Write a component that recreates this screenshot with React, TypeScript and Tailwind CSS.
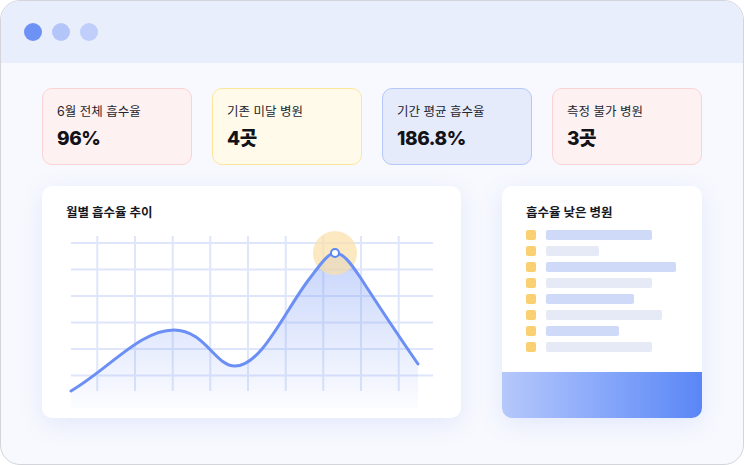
import React from 'react';

const font = { fontFamily: 'Inter, "Noto Sans CJK KR", "Noto Sans", sans-serif' };

const stats = [
  { label: '6월 전체 흡수율', value: '96%', box: 'bg-[#fef1f2] border-[#fbd3d4]' },
  { label: '기존 미달 병원', value: '4곳', box: 'bg-[#fffaea] border-[#fde59a]' },
  { label: '기간 평균 흡수율', value: '186.8%', box: 'bg-[#e5ebfb] border-[#b5c8f9]' },
  { label: '측정 불가 병원', value: '3곳', box: 'bg-[#fef1f2] border-[#fbd3d4]' },
];

const rows = [106, 53, 130, 106, 88, 116, 73, 106];

const hLines = [243, 269.5, 296, 322.5, 349, 375.5];
const vLines = [97.3, 135, 172.7, 210.3, 248, 285.7, 323.3, 361, 398.7];

const curve =
  'M71,391 C110,368 140,330 174,330 C205,330 215,366 235,366 C262,366 285,310 310,278 C320,265 328,253 335,253 C343,253 350,262 360,277 C380,308 400,338 418,364';

function StatCard({ label, value, box }: { label: string; value: string; box: string }) {
  return (
    <div className={`w-[150px] h-[77px] rounded-[10px] border px-[14px] pt-[14px] ${box}`}>
      <div className="text-[12.5px] leading-[18px] text-[#23262f]">{label}</div>
      <div className="mt-[6px] text-[19px] leading-[24px] font-extrabold text-[#111318] tracking-[-0.4px]">{value}</div>
    </div>
  );
}

function TrendChart() {
  return (
    <svg width={419} height={180} viewBox="42 230 419 180">
      <defs>
        <linearGradient id="area" x1="0" y1="253" x2="0" y2="408" gradientUnits="userSpaceOnUse">
          <stop offset="0" stopColor="#6b8ff5" stopOpacity="0.38" />
          <stop offset="1" stopColor="#6b8ff5" stopOpacity="0.02" />
        </linearGradient>
      </defs>
      {hLines.map((y) => (
        <line key={`h${y}`} x1={71} x2={433} y1={y} y2={y} stroke="#dfe6fb" strokeWidth={2} />
      ))}
      {vLines.map((x) => (
        <line key={`v${x}`} x1={x} x2={x} y1={236} y2={391} stroke="#dfe6fb" strokeWidth={2} />
      ))}
      <path d={`${curve} L418,408 L71,408 Z`} fill="url(#area)" />
      <circle cx={335} cy={253} r={22} fill="#fbdfa8" fillOpacity={0.7} />
      <path d={curve} fill="none" stroke="#6b8ff5" strokeWidth={3} strokeLinecap="round" />
      <circle cx={335} cy={253} r={4} fill="#fff" stroke="#5b86f5" strokeWidth={2} />
    </svg>
  );
}

export default function App() {
  return (
    <div className="w-[744px] h-[465px] bg-white" style={font}>
      <div className="w-full h-full rounded-[20px] border border-[#d4d5da] overflow-hidden flex flex-col bg-[#f7f9fe]">
        {/* window bar */}
        <div className="h-[62px] shrink-0 bg-[#e8eefc] flex items-center gap-[10px] pl-[23px]">
          <span className="w-[18px] h-[18px] rounded-full bg-[#6e91f5]" />
          <span className="w-[18px] h-[18px] rounded-full bg-[#b4c6f9]" />
          <span className="w-[18px] h-[18px] rounded-full bg-[#bfcefa]" />
        </div>

        <div className="px-[41px] pt-[25px]">
          <div className="flex gap-[20px]">
            {stats.map((s) => (
              <StatCard key={s.label} {...s} />
            ))}
          </div>

          <div className="flex gap-[41px] mt-[21px]">
            <div className="w-[419px] h-[232px] rounded-[10px] bg-white shadow-[0_6px_24px_rgba(90,125,235,0.13)]">
              <div className="pl-[24px] pt-[18px] text-[12.5px] leading-[18px] font-bold text-[#16181f]">월별 흡수율 추이</div>
              <div className="mt-[8px]">
                <TrendChart />
              </div>
            </div>

            <div className="w-[200px] h-[232px] rounded-[10px] bg-white overflow-hidden flex flex-col shadow-[0_6px_24px_rgba(90,125,235,0.13)]">
              <div className="pl-[24px] pt-[18px] text-[12.5px] leading-[18px] font-bold text-[#16181f]">흡수율 낮은 병원</div>
              <div className="mt-[8px] pl-[24px] flex flex-col gap-[6px]">
                {rows.map((w, i) => (
                  <div key={i} className="flex items-center gap-[10px] h-[10px]">
                    <span className="w-[10px] h-[10px] rounded-[2px] bg-[#fbd072]" />
                    <span
                      className={`h-[10px] rounded-[2px] ${i % 2 === 0 ? 'bg-[#cfdaf9]' : 'bg-[#e6eaf6]'}`}
                      style={{ width: w }}
                    />
                  </div>
                ))}
              </div>
              <div className="flex-1 mt-[20px] bg-gradient-to-r from-[#b6c8fb] to-[#5a86f6]" />
            </div>
          </div>
        </div>
      </div>
    </div>
  );
}
